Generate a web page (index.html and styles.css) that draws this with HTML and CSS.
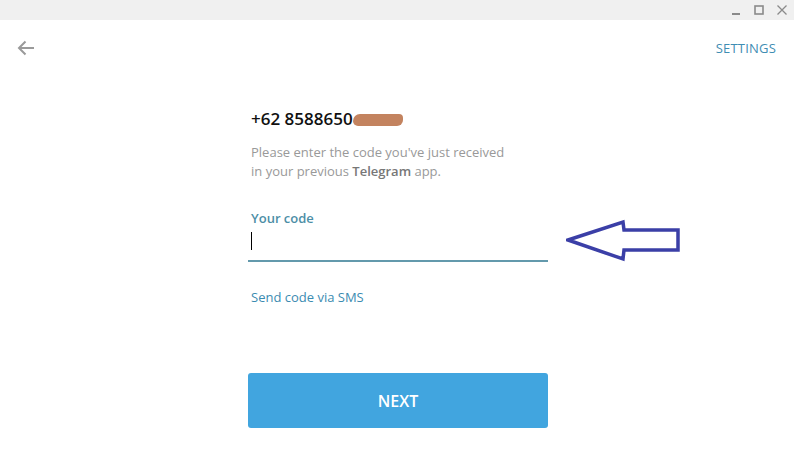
FILE: index.html
```html
<!DOCTYPE html>
<html lang="en">

<head>
  <meta charset="UTF-8" />
  <meta name="viewport" content="width=device-width, initial-scale=1.0" />
  <title>Telegram</title>
  <link rel="stylesheet" href="styles.css">
</head>

<body>

  <!-- barra da janela -->
  <div class="titlebar">
    <svg class="win-btn" width="12" height="12" viewBox="0 0 12 12"><path d="M2 10h8" stroke="#8a8a8a" stroke-width="2" /></svg>
    <svg class="win-btn" width="12" height="12" viewBox="0 0 12 12"><rect x="2" y="2" width="8" height="8" fill="none" stroke="#8a8a8a" stroke-width="1.6" /></svg>
    <svg class="win-btn" width="12" height="12" viewBox="0 0 12 12"><path d="M1.5 1.5l9 9M10.5 1.5l-9 9" stroke="#8a8a8a" stroke-width="1.3" /></svg>
  </div>

  <div class="topbar">
    <svg class="back" width="18" height="16" viewBox="0 0 18 16">
      <path d="M17 8H2M8.5 1.5L2 8l6.5 6.5" fill="none" stroke="#9a9a9a" stroke-width="2" />
    </svg>
    <a class="settings" href="#">SETTINGS</a>
  </div>

  <div class="login">
    <div class="phone">+62 8588650<span class="hidden-digits"></span></div>
    <p class="hint">Please enter the code you've just received<br>in your previous <b>Telegram</b> app.</p>

    <div class="field-label">Your code</div>
    <div class="field"><span class="caret"></span></div>

    <a class="sms" href="#">Send code via SMS</a>

    <button class="next">NEXT</button>
  </div>

  <!-- seta azul desenhada por cima -->
  <svg class="pointer" width="118" height="44" viewBox="0 0 118 44">
    <path d="M2 21L57 3L58 11H112V31H58L57 40Z" fill="none" stroke="#3b3fa7" stroke-width="3.5" stroke-linejoin="miter" />
  </svg>

</body>

</html>
```

FILE: styles.css
```css
body {
  margin: 0;
  background: #fff;
  font-family: "Open Sans", "Noto Sans", sans-serif;
  position: relative;
  height: 456px;
  overflow: hidden;
}

.titlebar {
  height: 20px;
  background: #f0f0f0;
  display: flex;
  justify-content: flex-end;
  align-items: center;
  gap: 11px;
  padding-right: 6px;
}

.topbar {
  height: 56px;
  display: flex;
  justify-content: space-between;
  align-items: center;
  padding: 0 18px 0 17px;
}

.back {
  display: block;
}

.settings {
  color: #3f8db3;
  font-size: 13px;
  text-decoration: none;
  letter-spacing: 0.2px;
}

.login {
  width: 300px;
  margin-left: calc(50% - 149px);
  display: flex;
  flex-direction: column;
  align-items: flex-start;
}

.phone {
  margin-top: 31px;
  margin-left: 3px;
  font-size: 17px;
  line-height: 24px;
  font-weight: 600;
  color: #111;
}

.hidden-digits {
  display: inline-block;
  width: 50px;
  height: 12px;
  background: #c3835f;
  border-radius: 7px 4px 6px 5px;
  vertical-align: -1px;
}

.hint {
  margin: 12px 0 0 3px;
  font-size: 13px;
  line-height: 19px;
  color: #999;
}

.hint b {
  color: #777;
  font-weight: 600;
}

.field-label {
  margin: 28px 0 0 3px;
  font-size: 13px;
  line-height: 18px;
  font-weight: 600;
  color: #4c8ea6;
}

.field {
  width: 297px;
  padding: 5px 0 10px 3px;
  border-bottom: 2px solid #6399ac;
}

.caret {
  display: block;
  width: 1px;
  height: 18px;
  background: #000;
}

.sms {
  margin: 26px 0 0 3px;
  font-size: 13px;
  line-height: 18px;
  color: #3b8bb1;
  text-decoration: none;
}

.next {
  margin-top: 67px;
  width: 300px;
  height: 55px;
  border: none;
  border-radius: 3px;
  background: #41a5df;
  color: #fff;
  font-family: inherit;
  font-size: 16px;
  font-weight: 600;
  cursor: pointer;
}

.pointer {
  position: absolute;
  left: 566px;
  top: 219px;
}
```
